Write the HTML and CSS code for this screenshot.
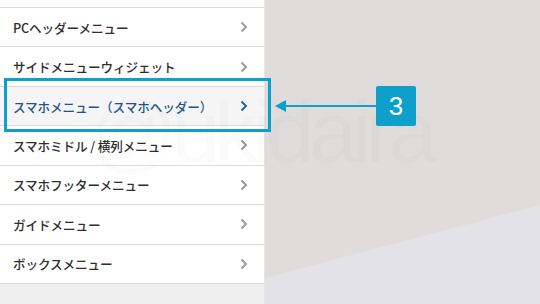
FILE: index.html
```html
<!DOCTYPE html>
<html lang="ja">
<head>
<meta charset="utf-8">
<link rel="stylesheet" href="styles.css">
</head>
<body>
<div class="page">
  <div class="panel">
    <ul class="menu">
      <li class="item stub"></li>
      <li class="item"><span>PCヘッダーメニュー</span><svg class="chev" viewBox="0 0 8 12"><path d="M1.5 1.5 L6 6 L1.5 10.5"/></svg></li>
      <li class="item"><span>サイドメニューウィジェット</span><svg class="chev" viewBox="0 0 8 12"><path d="M1.5 1.5 L6 6 L1.5 10.5"/></svg></li>
      <li class="item active"><span>スマホメニュー（スマホヘッダー）</span><svg class="chev" viewBox="0 0 8 12"><path d="M1.5 1.5 L6 6 L1.5 10.5"/></svg></li>
      <li class="item"><span>スマホミドル / 横列メニュー</span><svg class="chev" viewBox="0 0 8 12"><path d="M1.5 1.5 L6 6 L1.5 10.5"/></svg></li>
      <li class="item"><span>スマホフッターメニュー</span><svg class="chev" viewBox="0 0 8 12"><path d="M1.5 1.5 L6 6 L1.5 10.5"/></svg></li>
      <li class="item"><span>ガイドメニュー</span><svg class="chev" viewBox="0 0 8 12"><path d="M1.5 1.5 L6 6 L1.5 10.5"/></svg></li>
      <li class="item"><span>ボックスメニュー</span><svg class="chev" viewBox="0 0 8 12"><path d="M1.5 1.5 L6 6 L1.5 10.5"/></svg></li>
    </ul>
  </div>
  <div class="stage">
    <svg class="slope" viewBox="0 0 275 304" preserveAspectRatio="none"><polygon points="0,278 275,205 275,304 0,304"/></svg>
  </div>
  <div class="watermark" aria-hidden="true">@ukidaira</div>
  <div class="focus"></div>
  <div class="arrow"><span class="head"></span><span class="shaft"></span></div>
  <div class="badge">3</div>
</div>
</body>
</html>
```
FILE: styles.css
```css
* { box-sizing: border-box; }
html, body { margin: 0; padding: 0; }
body {
  width: 540px;
  height: 304px;
  overflow: hidden;
  font-family: "Noto Sans CJK JP", "Noto Sans", sans-serif;
}
.page {
  position: relative;
  display: flex;
  width: 540px;
  height: 304px;
  background: #e0dcdb;
}
.panel {
  width: 265px;
  height: 304px;
  background: #efefef;
  border-right: 1px solid #e6e6e6;
}
.menu {
  list-style: none;
  margin: 0;
  padding: 0;
}
.item {
  display: flex;
  align-items: center;
  justify-content: space-between;
  height: 39.43px;
  padding: 0 16px 0 13px;
  background: #fff;
  border-bottom: 1px solid #dcdcdc;
  font-size: 12.6px;
  font-weight: 500;
  color: #2e2e2e;
  letter-spacing: -0.1px;
}
.item.stub { height: 8px; }
.item.active {
  background: #f4f5f4;
  color: #22538e;
}
.chev {
  width: 8px;
  height: 12px;
  fill: none;
  stroke: #9a9a9a;
  stroke-width: 1.9;
}
.active .chev { stroke: #2a5b9a; }
.stage {
  position: relative;
  flex: 1;
}
.slope {
  position: absolute;
  inset: 0;
  width: 100%;
  height: 100%;
  fill: #e3e2e6;
}
.watermark {
  position: absolute;
  left: 88px;
  top: 88px;
  font-family: "Liberation Sans", Arial, sans-serif;
  font-size: 88px;
  letter-spacing: -6px;
  line-height: 1;
  color: rgba(0, 0, 0, 0.014);
  pointer-events: none;
}
.focus {
  position: absolute;
  left: 4px;
  top: 78px;
  width: 267px;
  height: 54px;
  border: 3px solid #0e9fca;
}
.arrow {
  position: absolute;
  left: 275px;
  top: 100px;
  width: 102px;
  height: 12px;
  display: flex;
  align-items: center;
}
.head {
  width: 0;
  height: 0;
  border-top: 6px solid transparent;
  border-bottom: 6px solid transparent;
  border-right: 11px solid #0e9fca;
}
.shaft {
  flex: 1;
  height: 2px;
  background: #0e9fca;
}
.badge {
  position: absolute;
  left: 376px;
  top: 86px;
  width: 40px;
  height: 40px;
  border-radius: 2px;
  background: #0e9fca;
  color: #fff;
  font-family: "Liberation Sans", Arial, sans-serif;
  font-size: 26px;
  display: flex;
  align-items: center;
  justify-content: center;
}
```
